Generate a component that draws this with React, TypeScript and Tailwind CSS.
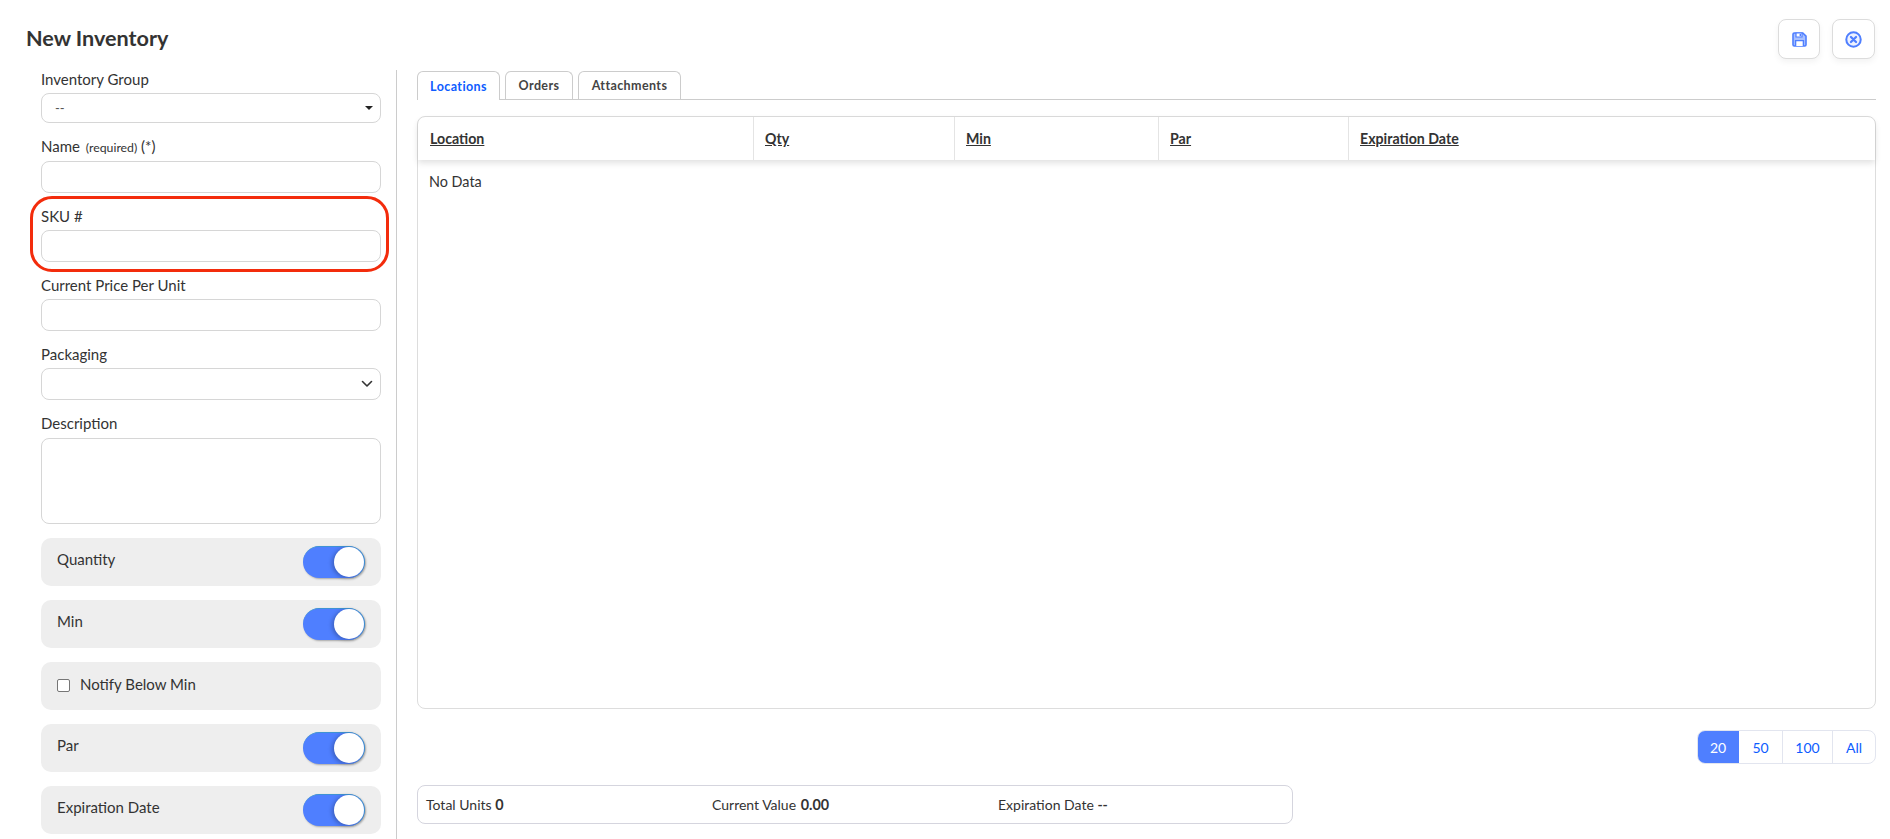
const font = { fontFamily: "Lato, 'Open Sans', sans-serif" };

function Field({ label, labelClass, children }: { label: React.ReactNode; labelClass: string; children: React.ReactNode }) {
  return (
    <div>
      <div className={`${labelClass} text-[15px] leading-[18px] text-[#333]`}>{label}</div>
      {children}
    </div>
  );
}

function TextBox({ h }: { h: string }) {
  return <div className={`${h} w-full rounded-lg border border-[#d6d6d6] bg-white`}></div>;
}

function ToggleRow({ label }: { label: string }) {
  return (
    <div className="flex h-12 items-start justify-between rounded-[10px] bg-[#eeeeee] pl-4 pr-[16px] pt-2">
      <span className="mt-[3px] text-[15px] leading-5 text-[#333]">{label}</span>
      <div className="flex h-8 w-[62px] items-start justify-end rounded-full border-t border-r border-[#3f93d4] bg-[#4f7fff] shadow-[1px_1px_2px_rgba(0,0,0,0.3)]">
        <div className="h-[30px] w-[30px] rounded-full bg-white shadow-[-2px_1px_4px_rgba(0,0,0,0.25)]"></div>
      </div>
    </div>
  );
}

function SaveIcon() {
  return (
    <svg width="15" height="15" viewBox="0 0 15 15" fill="none">
      <path d="M1 2.2C1 1.5 1.5 1 2.2 1H10.8L14 4.2V12.8C14 13.5 13.5 14 12.8 14H2.2C1.5 14 1 13.5 1 12.8V2.2Z" fill="#a9c1ff" stroke="#4f7fff" strokeWidth="1.6" />
      <path d="M4 1H10V5H4V1Z" fill="#fff" stroke="#4f7fff" strokeWidth="1.2" />
      <rect x="7.6" y="1.8" width="1.4" height="2.4" fill="#4f7fff" />
      <path d="M3.6 14V8.6H11.4V14" fill="#fff" stroke="#4f7fff" strokeWidth="1.4" />
    </svg>
  );
}

function CloseIcon() {
  return (
    <svg width="17" height="17" viewBox="0 0 16 16" fill="none">
      <circle cx="8" cy="8" r="6.8" fill="#eef2ff" stroke="#4f7fff" strokeWidth="1.9" />
      <path d="M5.6 5.6L10.4 10.4M10.4 5.6L5.6 10.4" stroke="#4f7fff" strokeWidth="2.1" strokeLinecap="round" />
    </svg>
  );
}

const columns = ["Location", "Qty", "Min", "Par", "Expiration Date"];

export default function App() {
  return (
    <div style={font} className="relative h-[839px] w-full overflow-hidden bg-white text-[#333]">
      <div className="flex h-[70px] items-start justify-between pl-[26px] pr-[15px]">
        <h1 className="mt-[24px] text-[21.6px] font-bold leading-[28px] text-[#333]">New Inventory</h1>
        <div className="mt-[19px] flex gap-3">
          <button className="flex h-[40px] w-[42px] items-center justify-center rounded-lg border border-[#dcdcdc] bg-white shadow-[0_3px_6px_rgba(0,0,0,0.05)]">
            <SaveIcon />
          </button>
          <button className="flex h-[40px] w-[43px] items-center justify-center rounded-lg border border-[#dcdcdc] bg-white shadow-[0_3px_6px_rgba(0,0,0,0.05)]">
            <CloseIcon />
          </button>
        </div>
      </div>

      <div className="flex h-[769px]">
        <div className="flex w-[397px] shrink-0 flex-col gap-[14px] border-r border-[#cccccc] pl-[41px] pr-[15px]">
          <Field label="Inventory Group" labelClass="h-[23px]">
            <div className="flex h-[30px] w-full items-center justify-between rounded-lg border border-[#d6d6d6] bg-white pl-[13px] pr-[5px] text-[13px] text-[#555]">
              <span className="mt-[2px]">--</span>
              <span className="mr-[2px] h-0 w-0 border-x-[4px] border-t-[4px] border-x-transparent border-t-[#222]"></span>
            </div>
          </Field>
          <Field
            label={
              <>
                Name <span className="ml-[2px] text-[12.3px]">(required)</span> (*)
              </>
            }
            labelClass="h-[24px]"
          >
            <TextBox h="h-8" />
          </Field>
          <Field label="SKU #" labelClass="h-[23px]">
            <TextBox h="h-8" />
          </Field>
          <Field label="Current Price Per Unit" labelClass="h-[23px]">
            <TextBox h="h-8" />
          </Field>
          <Field label="Packaging" labelClass="h-[23px]">
            <div className="flex h-8 w-full items-center justify-end rounded-lg border border-[#d6d6d6] bg-white pr-[7px]">
              <svg width="12" height="8" viewBox="0 0 12 8" fill="none">
                <path d="M1.5 1.5L6 6L10.5 1.5" stroke="#333" strokeWidth="1.6" strokeLinecap="round" strokeLinejoin="round" />
              </svg>
            </div>
          </Field>
          <Field label="Description" labelClass="h-[24px]">
            <TextBox h="h-[86px]" />
          </Field>
          <ToggleRow label="Quantity" />
          <ToggleRow label="Min" />
          <div className="flex h-12 items-start rounded-[10px] bg-[#eeeeee] pl-4 pt-[9px]">
            <span className="mt-[8px] h-[13px] w-[13px] rounded-[2px] border border-[#767676] bg-white"></span>
            <span className="ml-[10px] mt-[3px] text-[15px] leading-5 text-[#333]">Notify Below Min</span>
          </div>
          <ToggleRow label="Par" />
          <ToggleRow label="Expiration Date" />
        </div>

        <div className="min-w-0 flex-1 pl-5 pr-[14px]">
          <div className="flex h-[30px] items-end gap-[5px] border-b border-[#cccccc] pt-px">
            <div className="-mb-px flex h-[29px] w-[83px] items-center justify-center rounded-t-md border border-b-0 border-[#cccccc] bg-white pt-[2px] text-[12.5px] font-bold tracking-[0.4px] text-[#0d5cff]">
              Locations
            </div>
            <div className="flex h-[28px] w-[68px] items-center justify-center rounded-t-md border border-b-0 border-[#cccccc] pt-[2px] text-[12.5px] font-bold tracking-[0.4px] text-[#444]">
              Orders
            </div>
            <div className="flex h-[28px] w-[103px] items-center justify-center rounded-t-md border border-b-0 border-[#cccccc] pt-[2px] text-[12.5px] font-bold tracking-[0.4px] text-[#444]">
              Attachments
            </div>
          </div>

          <div className="mt-[16px] h-[593px] rounded-lg border border-[#dddddd]">
            <div className="grid h-[43px] grid-cols-[335px_201px_204px_190px_1fr] rounded-t-lg shadow-[0_3px_6px_rgba(0,0,0,0.12)]">
              {columns.map((c, i) => (
                <div key={c} className={`${i > 0 ? "border-l border-[#e4e4e4] pl-[11px]" : "pl-[12px]"} flex items-center text-[14.2px] font-bold text-[#333] underline`}>
                  {c}
                </div>
              ))}
            </div>
            <div className="pl-[11px] pt-[12px] text-[14.4px] leading-5 text-[#333]">No Data</div>
          </div>

          <div className="mt-[21px] flex justify-end">
            <div className="flex h-[34px] overflow-hidden rounded-lg border border-[#e2e5ef] text-[14px] text-[#0d5cff]">
              <div className="flex w-[41px] items-center justify-center bg-[#4f7fff] pr-[1px] text-white">20</div>
              <div className="flex w-[44px] items-center justify-center border-r border-[#e2e5ef]">50</div>
              <div className="flex w-[50px] items-center justify-center border-r border-[#e2e5ef]">100</div>
              <div className="flex w-[42px] items-center justify-center">All</div>
            </div>
          </div>

          <div className="mt-[21px] flex h-[39px] w-[876px] items-center rounded-lg border border-[#d5d5de] pl-2 text-[14px] text-[#333]">
            <div className="w-[286px]">
              Total Units <span className="text-[14.4px] font-bold">0</span>
            </div>
            <div className="w-[286px]">
              Current Value <span className="ml-[1px] text-[14.4px] font-bold">0.00</span>
            </div>
            <div>
              Expiration Date <span className="font-bold">--</span>
            </div>
          </div>
        </div>
      </div>

      <div className="absolute left-[30px] top-[196px] h-[76px] w-[359px] rounded-[22px] border-[3px] border-[#f32c0c]"></div>
    </div>
  );
}
